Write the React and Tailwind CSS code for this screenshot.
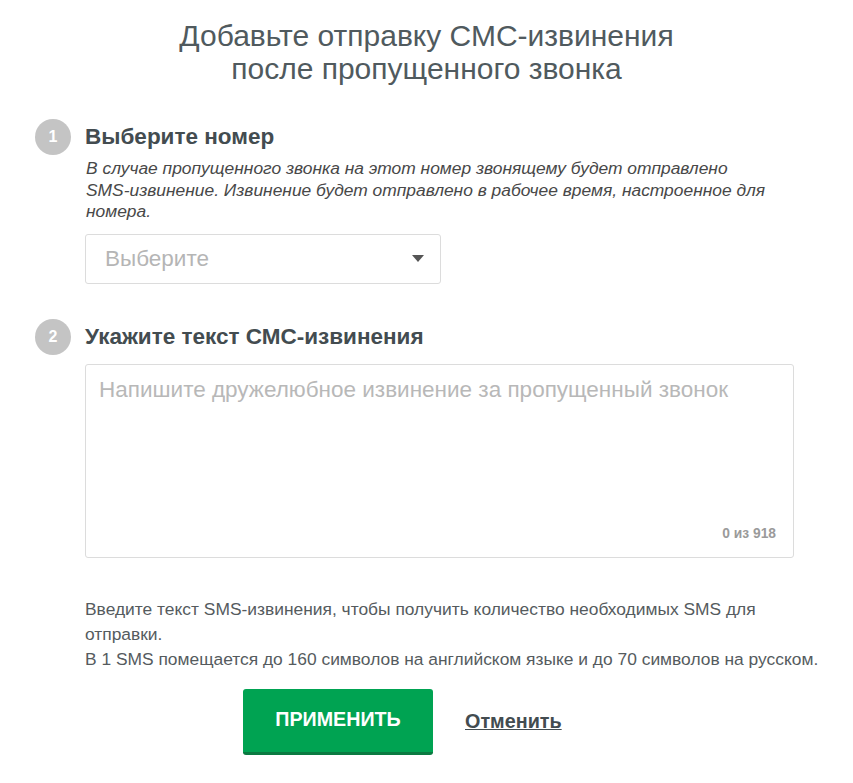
import React, { useState } from "react";

const Step = ({ num, title }) => (
  <div className="flex items-center gap-[14px]">
    <div className="w-[36px] h-[36px] rounded-full bg-[#c4c4c4] text-white font-bold text-[16px] flex items-center justify-center">
      {num}
    </div>
    <h2 className="text-[22.5px] font-bold text-[#434c50]">{title}</h2>
  </div>
);

const App = () => {
  const [text, setText] = useState("");

  return (
    <div className="w-[853px] min-h-[783px] bg-white font-['Liberation_Sans',Arial,sans-serif] text-[#434c50]">
      <h1 className="pt-[19px] text-center text-[30px] leading-[33px] text-[#505a5e]">
        Добавьте отправку СМС-извинения
        <br />
        после пропущенного звонка
      </h1>

      <div className="mt-[34px] pl-[35px]">
        <Step num="1" title="Выберите номер" />
        <p className="ml-[51px] mt-[3px] w-[710px] italic text-[17.4px] leading-[21.5px] text-[#484848]">
          В случае пропущенного звонка на этот номер звонящему будет отправлено
          <br />
          SMS-извинение. Извинение будет отправлено в рабочее время, настроенное для
          <br />
          номера.
        </p>
        <button className="ml-[50px] mt-[11px] w-[356px] h-[50px] border border-[#dcdcdc] rounded-[3px] flex items-center justify-between pl-[19px] pr-[16px]">
          <span className="text-[22.5px] text-[#b5b5b5]">Выберите</span>
          <svg width="12" height="7" viewBox="0 0 12 7">
            <path d="M0 0 L12 0 L6 7 Z" fill="#555" />
          </svg>
        </button>

        <div className="mt-[35px]">
          <Step num="2" title="Укажите текст СМС-извинения" />
        </div>
        <div className="relative ml-[50px] mt-[9px] w-[709px] h-[194px] border border-[#dcdcdc] rounded-[3px]">
          <textarea
            value={text}
            onChange={(e) => setText(e.target.value)}
            placeholder="Напишите дружелюбное извинение за пропущенный звонок"
            className="w-full h-full resize-none px-[13px] pt-[11px] text-[22.5px] leading-[28px] text-[#434c50] placeholder:text-[#b8b8b8] outline-none bg-transparent"
          />
          <span className="absolute right-[17px] bottom-[12px] text-[13.8px] font-bold text-[#9a9a9a]">
            {text.length} из 918
          </span>
        </div>

        <div className="ml-[50px] mt-[39px] w-[745px] text-[17.4px] leading-[25px] text-[#555b5e]">
          <p>
            Введите текст SMS-извинения, чтобы получить количество необходимых SMS для
            отправки.
          </p>
          <p>В 1 SMS помещается до 160 символов на английском языке и до 70 символов на русском.</p>
        </div>

        <div className="mt-[17px] ml-[208px] flex items-center gap-[32px]">
          <button className="w-[190px] h-[66px] rounded-[3px] bg-[#00a352] border-b-[3px] border-[#0b7a41] text-white font-bold text-[19.7px] uppercase">
            Применить
          </button>
          <a href="#" className="text-[19.8px] font-bold underline text-[#434c50]">
            Отменить
          </a>
        </div>
      </div>
    </div>
  );
};

export default App;
